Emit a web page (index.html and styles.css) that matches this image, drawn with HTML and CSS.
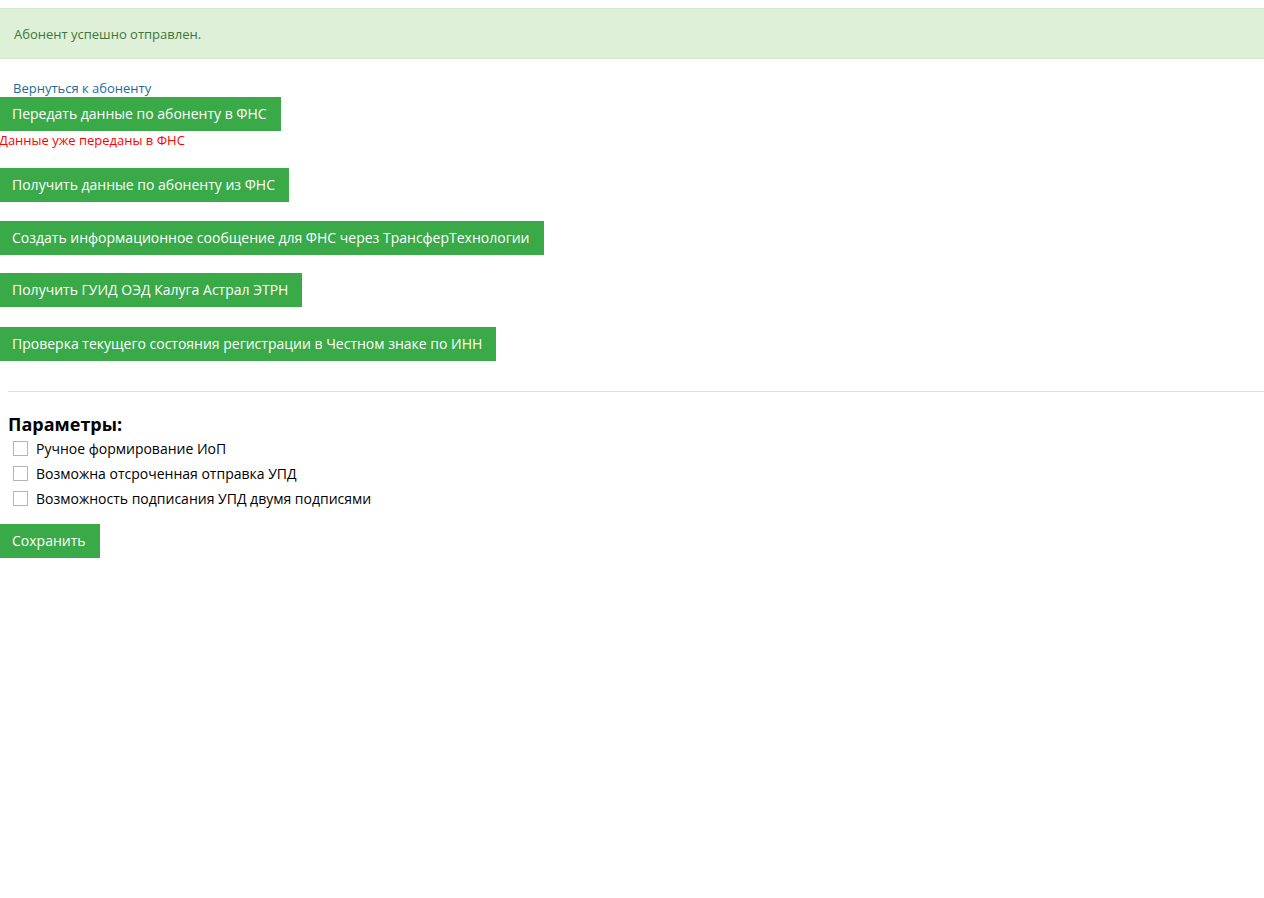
FILE: index.html
```html
<!DOCTYPE html>
<html lang="ru">
<head>
<meta charset="utf-8">
<title>Абонент</title>
<link rel="stylesheet" href="styles.css">
</head>
<body>
<div class="alert">Абонент успешно отправлен.</div>
<div class="content">
  <a class="back" href="#">Вернуться к абоненту</a>
  <button class="btn">Передать данные по абоненту в ФНС</button>
  <div class="error">Данные уже переданы в ФНС</div>
  <button class="btn b2">Получить данные по абоненту из ФНС</button>
  <button class="btn b3">Создать информационное сообщение для ФНС через ТрансферТехнологии</button>
  <button class="btn b4">Получить ГУИД ОЭД Калуга Астрал ЭТРН</button>
  <button class="btn b5">Проверка текущего состояния регистрации в Честном знаке по ИНН</button>
  <hr class="sep">
  <h3 class="params-title">Параметры:</h3>
  <label class="check"><span class="box"></span>Ручное формирование ИоП</label>
  <label class="check"><span class="box"></span>Возможна отсроченная отправка УПД</label>
  <label class="check"><span class="box"></span>Возможность подписания УПД двумя подписями</label>
  <button class="btn save">Сохранить</button>
</div>
</body>
</html>
```
FILE: styles.css
```css
html, body {
  margin: 0;
  padding: 0;
  background: #fff;
}
body {
  font-family: "Open Sans", "Noto Sans", sans-serif;
  font-size: 13px;
  color: #000;
  padding-top: 8px;
}
.alert {
  height: 49px;
  display: flex;
  align-items: center;
  padding: 0 14px;
  background: #dff0d8;
  border-top: 1px solid #d6e9c6;
  border-bottom: 1px solid #d6e9c6;
  color: #3c763d;
  font-size: 13px;
}
.content {
  display: flex;
  flex-direction: column;
  align-items: flex-start;
}
.back {
  margin-top: 20px;
  margin-left: 13px;
  line-height: 18px;
  color: #1f6a9a;
  text-decoration: none;
  font-size: 13px;
}
.btn {
  height: 34px;
  padding: 0 14px 1px 12px;
  border: 0;
  border-radius: 0;
  background: #39aa47;
  color: #fff;
  font-family: "Open Sans", "Noto Sans", sans-serif;
  font-size: 14px;
  cursor: pointer;
}
.error {
  color: #ff0000;
  font-size: 13px;
  line-height: 18px;
  margin-left: -1px;
}
.b2 { margin-top: 19px; }
.b3 { margin-top: 19px; }
.b4 { margin-top: 18px; }
.b5 { margin-top: 20px; }
.sep {
  align-self: stretch;
  margin: 30px 0 0 8px;
  border: 0;
  border-top: 1px solid #e0e0e0;
  height: 0;
}
.params-title {
  margin: 21px 0 0 8px;
  font-size: 18px;
  font-weight: 700;
  line-height: 23px;
}
.check {
  display: flex;
  align-items: center;
  height: 25px;
  margin-left: 13px;
  font-size: 14px;
}
.box {
  width: 13px;
  height: 13px;
  border: 1px solid #b5b5b5;
  background: #fff;
  margin-right: 8px;
}
.save {
  margin-top: 13px;
}
```
